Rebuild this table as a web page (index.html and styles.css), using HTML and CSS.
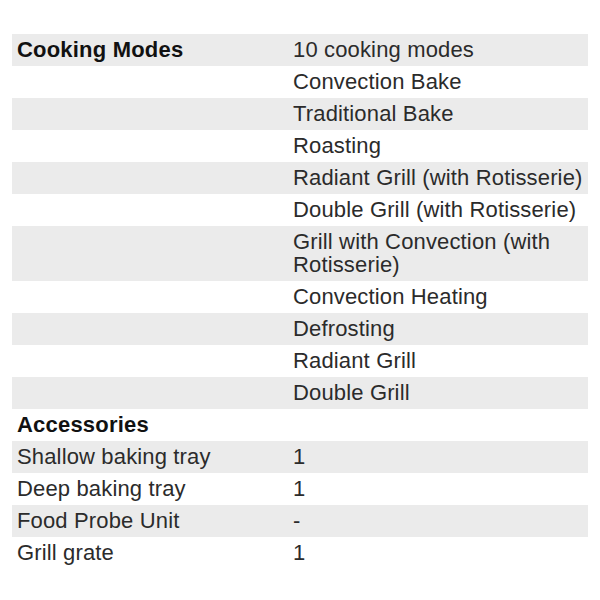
FILE: index.html
```html
<!DOCTYPE html>
<html>
<head>
<meta charset="utf-8">
<link rel="stylesheet" href="styles.css">
</head>
<body>
<div class="page">
<table class="specs">
  <tbody>
    <tr class="alt"><th class="key head">Cooking Modes</th><td class="val">10 cooking modes</td></tr>
    <tr><td class="key"></td><td class="val">Convection Bake</td></tr>
    <tr class="alt"><td class="key"></td><td class="val">Traditional Bake</td></tr>
    <tr><td class="key"></td><td class="val">Roasting</td></tr>
    <tr class="alt"><td class="key"></td><td class="val">Radiant Grill (with Rotisserie)</td></tr>
    <tr><td class="key"></td><td class="val">Double Grill (with Rotisserie)</td></tr>
    <tr class="alt"><td class="key"></td><td class="val">Grill with Convection (with Rotisserie)</td></tr>
    <tr><td class="key"></td><td class="val">Convection Heating</td></tr>
    <tr class="alt"><td class="key"></td><td class="val">Defrosting</td></tr>
    <tr><td class="key"></td><td class="val">Radiant Grill</td></tr>
    <tr class="alt"><td class="key"></td><td class="val">Double Grill</td></tr>
    <tr><th class="key head">Accessories</th><td class="val"></td></tr>
    <tr class="alt"><td class="key">Shallow baking tray</td><td class="val">1</td></tr>
    <tr><td class="key">Deep baking tray</td><td class="val">1</td></tr>
    <tr class="alt"><td class="key">Food Probe Unit</td><td class="val">-</td></tr>
    <tr><td class="key">Grill grate</td><td class="val">1</td></tr>
  </tbody>
</table>
</div>
</body>
</html>
```

FILE: styles.css
```css
html, body {
  margin: 0;
  padding: 0;
  background: #ffffff;
}

.page {
  padding: 34px 12px 0 12px;
}

.specs {
  width: 576px;
  border-collapse: collapse;
  font-family: "Liberation Sans", Arial, Helvetica, sans-serif;
  font-size: 22px;
  letter-spacing: 0.15px;
  line-height: 23px;
  color: #2b2b2b;
}

.specs td,
.specs th {
  padding: 4px 4px 5px 5px;
  text-align: left;
  vertical-align: top;
  font-weight: normal;
}

.specs .key {
  width: 268px;
}

.specs .val {
  padding-left: 4px;
}

.specs .head {
  font-weight: bold;
  letter-spacing: 0.2px;
  color: #111111;
}

.specs tr.alt {
  background: #ebebeb;
}
```
